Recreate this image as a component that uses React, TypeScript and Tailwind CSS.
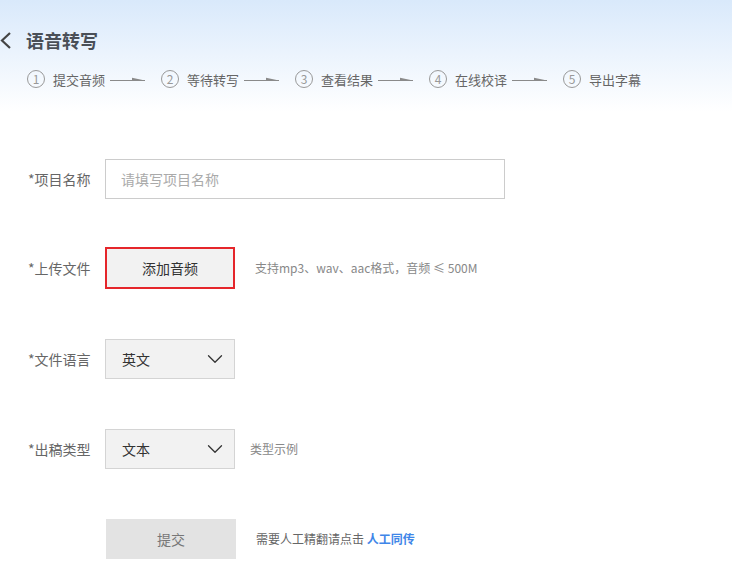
import { ChevronDown } from "lucide-react";

const steps = ["提交音频", "等待转写", "查看结果", "在线校译", "导出字幕"];

const StepArrow = () => (
  <svg width="36" height="8" viewBox="0 0 36 8" className="ml-[5px] mr-[15px]">
    <line x1="0" y1="5.5" x2="35" y2="5.5" stroke="#8a8a8a" strokeWidth="1.2" />
    <path d="M22 2.8 L35 5.5 L22 5.5 Z" fill="#8a8a8a" />
  </svg>
);

const Select = ({ value }: { value: string }) => (
  <div className="w-[130px] h-[40px] border border-[#d4d4d4] bg-[#f2f2f2] flex items-center justify-between pl-[16px] pr-[6px]">
    <span className="text-[#333]">{value}</span>
    <ChevronDown size={26} strokeWidth={1.2} className="text-[#333]" />
  </div>
);

export default function App() {
  return (
    <div
      className="w-[732px] h-[575px] bg-white overflow-hidden text-[#333]"
      style={{ fontFamily: '"Noto Sans CJK SC", "Noto Sans", sans-serif' }}
    >
      {/* header */}
      <div className="h-[112px] bg-gradient-to-b from-[#d9e9fb] to-white pt-[28px]">
        <div className="flex items-center h-[24px]">
          <svg width="12" height="17" viewBox="0 0 12 17" className="ml-[0px]">
            <polyline points="10,1 2,8.5 10,16" fill="none" stroke="#444" strokeWidth="2.2" />
          </svg>
          <h1 className="ml-[14px] text-[18px] font-bold text-[#4a4f57] leading-none">语音转写</h1>
        </div>
        <div className="flex items-center mt-[18px] pl-[27px] h-[18px]">
          {steps.map((s, i) => (
            <div key={s} className="flex items-center">
              <span className="w-[18px] h-[18px] rounded-full border border-[#999] text-[#999] text-[12px] leading-none flex items-center justify-center">
                {i + 1}
              </span>
              <span className="ml-[8px] text-[13px] text-[#666] leading-none">{s}</span>
              {i < steps.length - 1 && <StepArrow />}
            </div>
          ))}
        </div>
      </div>

      {/* form */}
      <div className="pl-[28px] pt-[47px] text-[14px]">
        <div className="flex items-center h-[40px]">
          <label className="w-[77px] text-[#666]">*项目名称</label>
          <input
            placeholder="请填写项目名称"
            className="w-[400px] h-[40px] border border-[#ccc] px-[15px] text-[14px] placeholder:text-[#aaa] outline-none"
          />
        </div>

        <div className="flex items-center h-[42px] mt-[48px]">
          <label className="w-[77px] text-[#666]">*上传文件</label>
          <button className="w-[130px] h-[42px] border-2 border-[#e5262b] bg-[#f2f2f2] text-[#333] text-[14px]">
            添加音频
          </button>
          <span className="ml-[20px] text-[12px] text-[#888]">支持mp3、wav、aac格式，音频 ≤ 500M</span>
        </div>

        <div className="flex items-center h-[40px] mt-[50px]">
          <label className="w-[77px] text-[#666]">*文件语言</label>
          <Select value="英文" />
        </div>

        <div className="flex items-center h-[40px] mt-[50px]">
          <label className="w-[77px] text-[#666]">*出稿类型</label>
          <Select value="文本" />
          <span className="ml-[15px] text-[12px] text-[#888]">类型示例</span>
        </div>

        <div className="flex items-center h-[40px] mt-[50px]">
          <div className="w-[78px]" />
          <button className="w-[130px] h-[40px] bg-[#e3e3e3] text-[#777] text-[14px]">提交</button>
          <span className="ml-[20px] text-[12px] text-[#666]">
            需要人工精翻请点击 <a className="text-[#3f86e8] font-bold">人工同传</a>
          </span>
        </div>
      </div>
    </div>
  );
}
